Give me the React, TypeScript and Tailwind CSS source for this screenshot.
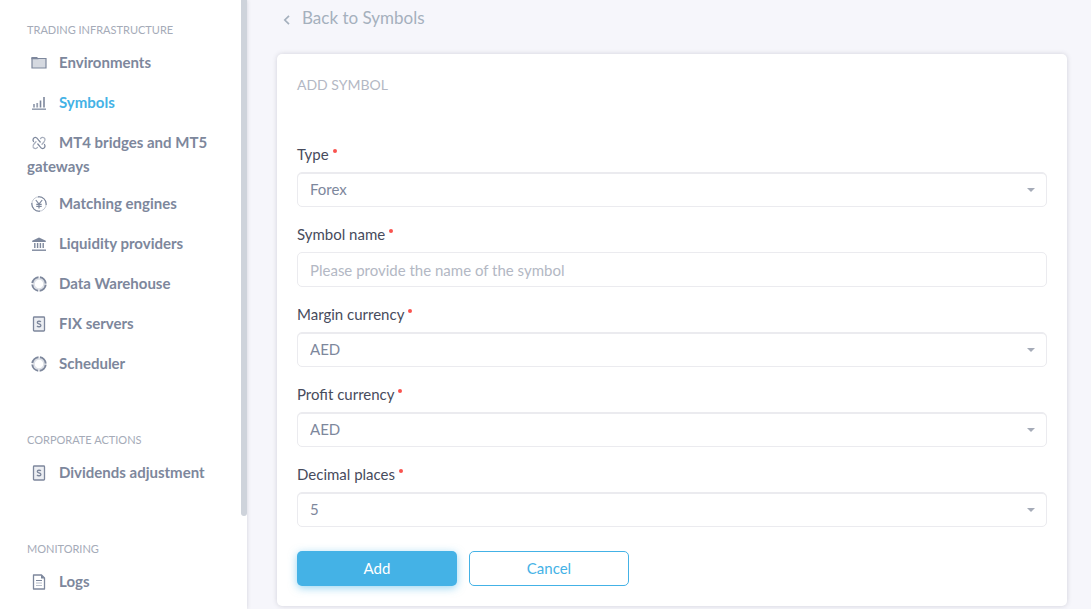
import type { ReactNode } from 'react';

type IconName = 'folder' | 'chart' | 'link' | 'yen' | 'bank' | 'ring' | 'doc' | 'log';

const SLATE = '#7d879c';

const drawings: Record<IconName, ReactNode> = {
  folder: (
    <>
      <path d="M1 3.500h14v9.500H1z" fill="#d5d9e0" stroke={SLATE} strokeWidth="1.2" />
      <path d="M.4 2h5.800l1.400 2.200H.4z" fill={SLATE} />
    </>
  ),
  chart: (
    <>
      <path d="M1 14.200h14" stroke="#98a1b2" strokeWidth="1.6" />
      <path d="M3 9v3.500M6.200 8v4.500" stroke="#98a1b2" strokeWidth="1.8" />
      <path d="M9.500 5.500v7M13 2v10.500" stroke={SLATE} strokeWidth="1.6" />
    </>
  ),
  link: (
    <g fill="none" strokeWidth="1.3" strokeLinecap="round">
      <path d="M9.500 3.600c1.200-1.600 3.400-1.400 4.300 0 .8 1.400 0 2.600-1 3.600L11 9.200" stroke="#a7aebd" />
      <path d="M6.500 12.400c-1.200 1.600-3.400 1.400-4.300 0-.8-1.400 0-2.600 1-3.600L5 6.800" stroke="#a7aebd" />
      <path d="M2.500 6.500C1.200 4.600 2.600 2.400 4.400 2.400c1.600 0 2.400 1.600 3.200 2.800l1.600 1.800" stroke={SLATE} />
      <path d="M13.500 9.500c1.300 1.900-.1 4.100-1.900 4.100-1.600 0-2.400-1.600-3.200-2.800L6.800 9" stroke={SLATE} />
    </g>
  ),
  yen: (
    <g fill="none">
      <circle cx="8" cy="8" r="7.200" stroke="#c3c8d2" strokeWidth="1" />
      <path d="M7 .9A7.200 7.200 0 0 1 15.100 9M9 15.100A7.200 7.200 0 0 1 .9 7" stroke={SLATE} strokeWidth="1.1" />
      <path d="M4.800 4l3.200 4 3.200-4M8 8v4.500M5.300 8.300h5.400M5.300 10.300h5.400" stroke={SLATE} strokeWidth="1.2" />
    </g>
  ),
  bank: (
    <>
      <path d="M8 1.500l6.800 3.300v1.300H1.200V4.800z" fill={SLATE} />
      <path d="M3.800 7v5M6.600 7v5M9.400 7v5M12.200 7v5" stroke={SLATE} strokeWidth="1.4" />
      <path d="M1 14.200h14" stroke={SLATE} strokeWidth="1.400" />
    </>
  ),
  ring: (
    <g fill="none">
      <circle cx="8" cy="8" r="5" stroke="#dde0e6" strokeWidth="1.500" />
      <circle cx="8" cy="8" r="6.700" stroke={SLATE} strokeWidth="2" strokeDasharray="9.124 1.400" strokeDashoffset="-0.700" />
    </g>
  ),
  doc: (
    <>
      <rect x="2.500" y="1" width="11" height="14" rx=".8" fill="#eceef2" stroke={SLATE} strokeWidth="1.300" />
      <path
        d="M9.900 5.900C9.200 5 6.300 4.900 6.300 6.500c0 1.800 3.600 1 3.600 2.900 0 1.700-3 1.700-3.900.6"
        fill="none"
        stroke={SLATE}
        strokeWidth="1.300"
      />
    </>
  ),
  log: (
    <>
      <path d="M2.500 1h8l3 3v11h-11z" fill="#fff" stroke={SLATE} strokeWidth="1.300" strokeLinejoin="round" />
      <path d="M10 .8v3.700h3.700z" fill={SLATE} />
      <path d="M5 6.500h6" stroke={SLATE} />
      <path d="M5 9h6M5 11.500h6" stroke="#b9bfcb" />
    </>
  ),
};

function Icon({ name }: { name: IconName }) {
  return (
    <svg viewBox="0 0 16 16" aria-hidden="true" className="mr-3 ml-1 inline-block size-4 align-[-3px]">
      {drawings[name]}
    </svg>
  );
}

interface Item {
  label: string;
  icon: IconName;
  active?: boolean;
  long?: boolean;
}

const sections: { title: string; items: Item[] }[] = [
  {
    title: 'TRADING INFRASTRUCTURE',
    items: [
      { label: 'Environments', icon: 'folder' },
      { label: 'Symbols', icon: 'chart', active: true },
      { label: 'MT4 bridges and MT5 gateways', icon: 'link', long: true },
      { label: 'Matching engines', icon: 'yen' },
      { label: 'Liquidity providers', icon: 'bank' },
      { label: 'Data Warehouse', icon: 'ring' },
      { label: 'FIX servers', icon: 'doc' },
      { label: 'Scheduler', icon: 'ring' },
    ],
  },
  { title: 'CORPORATE ACTIONS', items: [{ label: 'Dividends adjustment', icon: 'doc' }] },
  { title: 'MONITORING', items: [{ label: 'Logs', icon: 'log' }] },
];

function Sidebar() {
  return (
    <aside className="flex w-[247px] shrink-0 bg-white shadow-[0_0_4px_rgba(70,70,90,0.2)]">
      <nav className="flex min-w-0 flex-1 flex-col gap-[45px] pt-[18px] pl-[27px]">
        {sections.map((section) => (
          <section key={section.title}>
            <h2 className="text-[11px] leading-6 text-[#a5abb8]">{section.title}</h2>
            <ul>
              {section.items.map((item) => (
                <li key={item.label} className={item.long ? 'pt-2 pb-[5px]' : 'py-2'}>
                  <a
                    href="#"
                    className={`block text-[15px] leading-6 font-bold ${item.active ? 'text-[#44b2e6]' : 'text-[#7d879c]'}`}
                  >
                    <Icon name={item.icon} />
                    {item.label}
                  </a>
                </li>
              ))}
            </ul>
          </section>
        ))}
      </nav>
      <div className="h-[516px] w-1.5 rounded-b-full bg-[#ced3db]" />
    </aside>
  );
}

const control =
  'block h-[35px] w-full appearance-none rounded-[5px] border border-[#ebebef] bg-white px-3 text-[15px] text-[#7d879c] outline-none placeholder:text-[#b3b8c4] placeholder:opacity-100';

function Field({ id, label, children }: { id: string; label: string; children: ReactNode }) {
  return (
    <div>
      <label htmlFor={id} className="mb-1.5 flex h-6 items-center gap-1 text-[15px] text-[#474b5c]">
        {label}
        <span className="mb-1.5 size-1 rounded-full bg-[#f9534f]" />
      </label>
      {children}
    </div>
  );
}

function SelectField({ id, label, options }: { id: string; label: string; options: string[] }) {
  return (
    <Field id={id} label={label}>
      <div className="relative">
        <select id={id} className={`${control} shadow-[inset_0_1px_0_#ebebef]`}>
          {options.map((option) => (
            <option key={option}>{option}</option>
          ))}
        </select>
        <svg viewBox="0 0 8 4" aria-hidden="true" className="pointer-events-none absolute top-4 right-3 h-1 w-2">
          <path d="M0 0h8L4 4z" fill="#a5abb8" />
        </svg>
      </div>
    </Field>
  );
}

export default function App() {
  return (
    <div className="flex min-h-screen bg-[#f6f6fb] font-['Lato',sans-serif]">
      <Sidebar />
      <main className="min-w-0 flex-1 pt-1.5 pr-6 pb-[3px] pl-[30px]">
        <a href="#" className="flex h-6 items-center gap-3 pl-1.5 text-[17px] text-[#a5b0bd]">
          <svg viewBox="0 0 7 10" aria-hidden="true" className="mt-1 h-2.5 w-[7px]">
            <path d="M6 .8L1.800 5 6 9.200" fill="none" stroke="currentColor" strokeWidth="1.700" />
          </svg>
          Back to Symbols
        </a>
        <form
          className="mt-6 rounded-[5px] bg-white p-5 shadow-[0_0_5px_rgba(70,70,90,0.2)]"
          onSubmit={(event) => event.preventDefault()}
        >
          <h1 className="mb-[46px] text-[14px] leading-[22px] text-[#b3b8c4]">ADD SYMBOL</h1>
          <div className="flex flex-col gap-[15px]">
            <SelectField id="type" label="Type" options={['Forex']} />
            <Field id="symbol-name" label="Symbol name">
              <input id="symbol-name" type="text" placeholder="Please provide the name of the symbol" className={control} />
            </Field>
            <SelectField id="margin-currency" label="Margin currency" options={['AED']} />
            <SelectField id="profit-currency" label="Profit currency" options={['AED']} />
            <SelectField id="decimal-places" label="Decimal places" options={['5']} />
          </div>
          <div className="mt-6 flex gap-3 text-[15px]">
            <button
              type="submit"
              className="h-[35px] w-40 rounded-[5px] bg-[#44b2e6] text-white shadow-[0_2px_8px_rgba(68,178,230,0.55)]"
            >
              Add
            </button>
            <button type="button" className="h-[35px] w-40 rounded-[5px] border border-[#44b2e6] bg-white text-[#44b2e6]">
              Cancel
            </button>
          </div>
        </form>
      </main>
    </div>
  );
}
